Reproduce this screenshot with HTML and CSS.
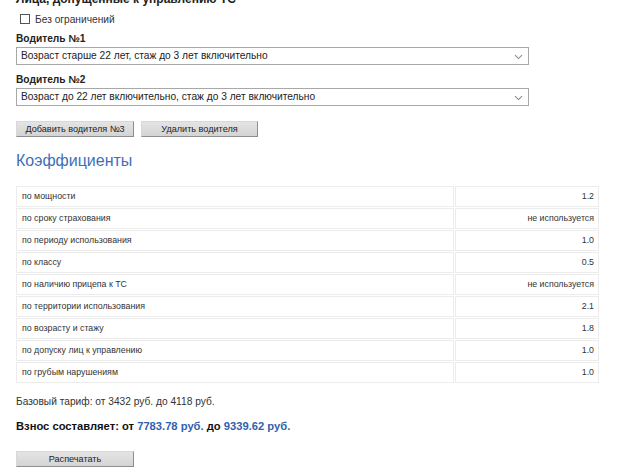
FILE: index.html
```html
<!DOCTYPE html>
<html lang="ru">
<head>
<meta charset="utf-8">
<title>Расчёт ОСАГО</title>
<link rel="stylesheet" href="styles.css">
</head>
<body>
<div class="page">
  <h3 class="section-title">Лица, допущенные к управлению ТС</h3>
  <label class="check"><input type="checkbox" class="check-box"><span>Без ограничений</span></label>

  <div class="driver">
    <div class="driver-label">Водитель №1</div>
    <div class="select">
      <select class="select-input">
        <option>Возраст старше 22 лет, стаж до 3 лет включительно</option>
      </select>
      <svg class="select-arrow" width="9" height="6" viewBox="0 0 9 6"><path d="M1 1.2 L4.5 4.6 L8 1.2" fill="none" stroke="#8a8a8a" stroke-width="1.1"/></svg>
    </div>
  </div>

  <div class="driver">
    <div class="driver-label">Водитель №2</div>
    <div class="select">
      <select class="select-input">
        <option>Возраст до 22 лет включительно, стаж до 3 лет включительно</option>
      </select>
      <svg class="select-arrow" width="9" height="6" viewBox="0 0 9 6"><path d="M1 1.2 L4.5 4.6 L8 1.2" fill="none" stroke="#8a8a8a" stroke-width="1.1"/></svg>
    </div>
  </div>

  <div class="actions">
    <button class="btn">Добавить водителя №3</button>
    <button class="btn">Удалить водителя</button>
  </div>

  <h2 class="coef-title">Коэффициенты</h2>

  <table class="coef">
    <tr><td>по мощности</td><td class="val">1.2</td></tr>
    <tr><td>по сроку страхования</td><td class="val">не используется</td></tr>
    <tr><td>по периоду использования</td><td class="val">1.0</td></tr>
    <tr><td>по классу</td><td class="val">0.5</td></tr>
    <tr><td>по наличию прицепа к ТС</td><td class="val">не используется</td></tr>
    <tr><td>по территории использования</td><td class="val">2.1</td></tr>
    <tr><td>по возрасту и стажу</td><td class="val">1.8</td></tr>
    <tr><td>по допуску лиц к управлению</td><td class="val">1.0</td></tr>
    <tr><td>по грубым нарушениям</td><td class="val">1.0</td></tr>
  </table>

  <p class="base">Базовый тариф: от 3432 руб. до 4118 руб.</p>
  <p class="total"><b>Взнос составляет:</b> от <span class="sum">7783.78 руб.</span> до <span class="sum">9339.62 руб.</span></p>

  <button class="btn btn-print">Распечатать</button>
</div>
</body>
</html>
```

FILE: styles.css
```css
html, body {
  margin: 0;
  padding: 0;
  background: #fff;
}

body {
  font-family: "Liberation Sans", Arial, sans-serif;
  color: #222;
  overflow: hidden;
}

.page {
  width: 584px;
  padding: 0 16px;
}

.section-title {
  margin: -8px 0 0;
  font-size: 12px;
  line-height: 14px;
  font-weight: bold;
  color: #222;
}

.check {
  display: flex;
  align-items: center;
  gap: 5px;
  margin: 5px 0 0 4px;
  font-size: 10.2px;
  color: #333;
  height: 16px;
}

.check-box {
  appearance: none;
  margin: 0;
  width: 10px;
  height: 10px;
  border: 1px solid #555;
  background: #fff;
  border-radius: 0;
}

.driver {
  margin-top: 5px;
}

.driver + .driver {
  margin-top: 8px;
}

.driver-label {
  font-size: 10.2px;
  font-weight: bold;
  line-height: 14px;
  color: #222;
  margin-bottom: 1px;
}

.select {
  position: relative;
  width: 513px;
}

.select-input {
  appearance: none;
  display: block;
  width: 513px;
  height: 18px;
  margin: 0;
  padding: 0 0 0 4px;
  border: 1px solid #a8a8a8;
  border-radius: 0;
  background: #fff;
  font-family: "Liberation Sans", Arial, sans-serif;
  font-size: 10.2px;
  color: #222;
  line-height: 16px;
}

.select-arrow {
  position: absolute;
  right: 6px;
  top: 7px;
}

.actions {
  display: flex;
  gap: 7px;
  margin-top: 15px;
}

.btn {
  width: 118px;
  height: 16px;
  margin: 0;
  padding: 0;
  border: 1px solid;
  border-color: #d8d8d8 #8e8e8e #8e8e8e #d8d8d8;
  background: linear-gradient(#e4e4e4, #d4d4d4);
  font-family: "Liberation Sans", Arial, sans-serif;
  font-size: 9.1px;
  color: #222;
  line-height: 14px;
}

.actions .btn + .btn {
  width: 117px;
}

.coef-title {
  margin: 14px 0 0;
  font-size: 16px;
  line-height: 20px;
  font-weight: normal;
  color: #3d70b8;
}

.coef {
  width: 585px;
  margin: 14px 0 0 -1px;
  border-collapse: separate;
  border-spacing: 1px;
  font-size: 8.8px;
  color: #333;
}

.coef td {
  height: 19px;
  padding: 0 4px 0 5px;
  border: 1px solid #ececec;
  line-height: 19px;
}

.coef td.val {
  width: 133px;
  text-align: right;
}

.base {
  margin: 11px 0 0;
  font-size: 10.2px;
  line-height: 14px;
  color: #333;
}

.total {
  margin: 9px 0 0;
  font-size: 11.2px;
  line-height: 16px;
  font-weight: bold;
  color: #111;
}

.total b {
  font-weight: bold;
}

.sum {
  color: #2f62ad;
}

.btn-print {
  display: block;
  margin-top: 17px;
}
```
